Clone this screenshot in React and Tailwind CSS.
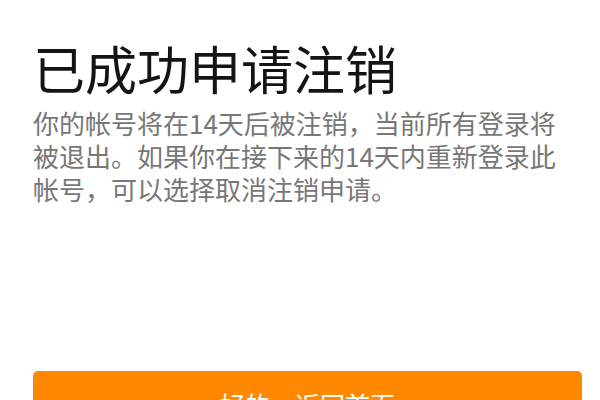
import React from 'react';

export default function App() {
  return (
    <div
      className="h-[400px] w-[600px] overflow-hidden bg-white pl-[33px] pt-[38px]"
      style={{ fontFamily: '"Noto Sans CJK SC", "Noto Sans", sans-serif' }}
    >
      <h1 className="text-[52px] leading-[60px] font-normal text-[#141414]">已成功申请注销</h1>

      <p className="mt-[8px] w-[534px] text-[26px] leading-[33px] text-[#777777]">
        你的帐号将在14天后被注销，当前所有登录将被退出。如果你在接下来的14天内重新登录此帐号，可以选择取消注销申请。
      </p>

      {/* primary action, sits low and runs past the page edge */}
      <button className="mt-[166px] flex h-[68px] w-[549px] items-center justify-center rounded-[5px] bg-[#ff8800] text-[25px] text-white">
        好的，返回首页
      </button>
    </div>
  );
}
